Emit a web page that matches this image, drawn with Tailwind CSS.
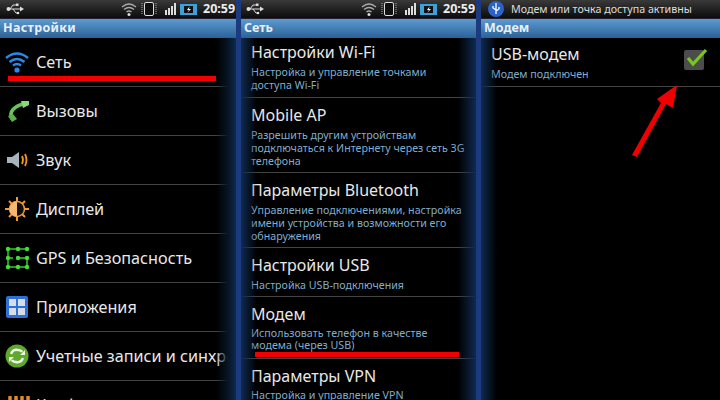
<!DOCTYPE html>
<html lang="ru">
<head>
  <meta charset="UTF-8" />
  <title>Настройки модема</title>
  <script src="https://cdn.jsdelivr.net/npm/@tailwindcss/browser@4"></script>
</head>
<body class="bg-[#1b3a80] w-[720px] h-[400px] overflow-hidden relative font-['Noto_Sans',sans-serif] text-[#e8e8e8]">
  <div class="flex gap-[5px] h-[400px]">

    <!-- Настройки -->
    <div class="relative w-[236px] h-[400px] overflow-hidden bg-black">
      <div class="flex items-center h-[18px] pl-[6px] bg-linear-to-b from-[#3a3a3a] to-[#0c0c0c]">
        <svg width="18" height="12" viewBox="0 0 18 12" class="text-[#ddd] shrink-0"><path d="M1 6h14M4 6l3-4h3M7 6l3 4h2" stroke="currentColor" fill="none"/><circle cx="2.500" cy="6" r="2" fill="currentColor"/><path d="M14 3.500l4 2.500-4 2.500z" fill="currentColor"/><rect x="10" y="0.500" width="2.500" height="2.500" fill="currentColor"/><circle cx="12" cy="10" r="1.300" fill="currentColor"/></svg>
        <div class="ml-auto flex items-center">
          <svg width="16" height="16" viewBox="0 0 16 16" class="mr-[4px]"><path d="M1 6q7-6 14 0M3 8.500q5-4 10 0M5.500 11q2.500-2 5 0" stroke="#aaa" fill="none" stroke-width="1.300"/><circle cx="8" cy="13.500" r="1.500" fill="#ddd"/></svg>
          <svg width="16" height="16" viewBox="0 0 16 16" class="mr-[8px]"><rect x="3.500" y="1.500" width="9" height="13" rx="1.500" fill="#111" stroke="#ddd"/><path d="M1 2v12M15 2v12" stroke="#aaa" stroke-dasharray="1 1"/></svg>
          <div class="flex items-end gap-[1px] h-[12px] mr-[4px]"><i class="w-[2px] h-[5px] bg-[#ddd]"></i><i class="w-[2px] h-[7px] bg-[#ddd]"></i><i class="w-[2px] h-[9px] bg-[#ddd]"></i><i class="w-[2px] h-[12px] bg-[#ddd]"></i></div>
          <svg width="17" height="11" viewBox="0 0 17 11" class="mr-[6px]"><rect width="17" height="11" fill="#3ba0dc"/><rect x="4" y="2" width="9" height="7" fill="#111"/><path d="M9.500 2.500L7 6h2l-1.500 2.500L11 5H9z" fill="#fff"/></svg>
          <span class="font-bold text-[12.500px] leading-[18px] w-[33px] text-[#eee]">20:59</span>
        </div>
      </div>
      <div class="h-[1px] bg-[#223]"></div>
      <div class="flex items-center h-[19px] pl-[3px] bg-linear-to-b from-[#5d9bd0] to-[#2a6298] text-[12.500px] tracking-[0.3px] font-bold text-[#e8f0f6]">Настройки</div>
      <div class="flex items-center h-[49px] border-b border-[#444]">
        <svg width="26" height="24" viewBox="0 0 26 24" class="ml-[4px] shrink-0"><path d="M2 8q11-9 22 0M5.500 12q7.500-6 15 0M9 15.500q4-3 8 0" stroke="#2a8ae8" fill="none" stroke-width="2.400"/><circle cx="13" cy="20" r="2.600" fill="#2a8ae8"/></svg>
        <span class="ml-[6px] text-[16.200px]">Сеть</span>
      </div>
      <div class="flex items-center h-[49px] border-b border-[#444]">
        <svg width="26" height="24" viewBox="0 0 26 24" class="ml-[4px] shrink-0"><path d="M8 20Q3 9 22 4" stroke="#6cc25a" stroke-width="3.500" fill="none"/><path d="M4 17l5-2 4 5-5 3z" fill="#5cb050"/><path d="M17 2l8 0 0 4-6 3z" fill="#8ad878"/></svg>
        <span class="ml-[6px] text-[16.200px]">Вызовы</span>
      </div>
      <div class="flex items-center h-[49px] border-b border-[#444]">
        <svg width="26" height="24" viewBox="0 0 26 24" class="ml-[4px] shrink-0"><path d="M3 9h5l7-5v16l-7-5H3z" fill="#a8b4bc"/><path d="M18 8q2 4 0 8M21 6q3 6 0 12" stroke="#f0961e" fill="none" stroke-width="1.800"/></svg>
        <span class="ml-[6px] text-[16.200px]">Звук</span>
      </div>
      <div class="flex items-center h-[49px] border-b border-[#444]">
        <svg width="26" height="24" viewBox="0 0 26 24" class="ml-[4px] shrink-0"><path d="M13 0v24M1 12h24M5 4l16 16M21 4L5 20" stroke="#f09a30" stroke-width="2"/><circle cx="13" cy="12" r="7.500" fill="#111" stroke="#f09a30" stroke-width="1.500"/><path d="M13 4.500a7.500 7.500 0 0 0 0 15z" fill="#f7b874"/></svg>
        <span class="ml-[6px] text-[16.200px]">Дисплей</span>
      </div>
      <div class="flex items-center h-[49px] border-b border-[#444]">
        <svg width="26" height="24" viewBox="0 0 26 24" class="ml-[4px] shrink-0"><path d="M23 3H4v18h19V12h-9M4 12h5" stroke="#1f9c1f" stroke-width="2" fill="none"/><g fill="#44dd33"><circle cx="4" cy="3" r="2.200"/><circle cx="14" cy="3" r="2.200"/><circle cx="23" cy="3" r="2.200"/><circle cx="4" cy="12" r="2.200"/><circle cx="14" cy="12" r="2.200"/><circle cx="23" cy="12" r="2.200"/><circle cx="4" cy="21" r="2.200"/><circle cx="14" cy="21" r="2.200"/><circle cx="23" cy="21" r="2.200"/></g></svg>
        <span class="ml-[6px] text-[16.200px]">GPS и Безопасность</span>
      </div>
      <div class="flex items-center h-[49px] border-b border-[#444]">
        <svg width="26" height="24" viewBox="0 0 26 24" class="ml-[4px] shrink-0"><rect x="2" y="1" width="22" height="22" rx="2" fill="#2f6fd8"/><g fill="#d6dde6"><rect x="5" y="4" width="7" height="7"/><rect x="14" y="4" width="7" height="7"/><rect x="5" y="13" width="7" height="7"/><rect x="14" y="13" width="7" height="7"/></g></svg>
        <span class="ml-[6px] text-[16.200px]">Приложения</span>
      </div>
      <div class="flex items-center h-[49px] border-b border-[#444]">
        <svg width="26" height="24" viewBox="0 0 26 24" class="ml-[4px] shrink-0"><circle cx="13" cy="12" r="11.500" fill="#5fa82e"/><path d="M7 10q2-5 7-4 3 0 4 2M19 14q-2 5-7 4-3 0-4-2" stroke="#eef5e4" stroke-width="2.400" fill="none"/><path d="M21 6v5h-5zM5 18v-5h5z" fill="#eef5e4"/></svg>
        <span class="ml-[6px] text-[16.200px] whitespace-nowrap">Учетные записи и синхронизация</span>
      </div>
      <div class="flex items-center h-[49px]">
        <svg width="26" height="24" viewBox="0 0 26 24" class="ml-[4px] self-start mt-[15px] shrink-0"><path d="M6 1v14M12 1v14M18 1v14M24 1v14" stroke="#e08a20" stroke-width="3.500" stroke-linecap="round"/></svg>
        <span class="ml-[6px] text-[16.200px]">Конфиденциальность</span>
      </div>
      <div class="absolute right-0 top-[38px] bottom-0 w-[20px] bg-linear-to-r from-transparent via-[#071524] via-60% to-[#0f2a50]"></div>
      <div class="absolute left-[8px] top-[76px] w-[208px] h-[5px] bg-[#f00000]"></div>
    </div>

    <!-- Сеть -->
    <div class="relative w-[235px] h-[400px] overflow-hidden bg-black">
      <div class="flex items-center h-[18px] pl-[5px] bg-linear-to-b from-[#3a3a3a] to-[#0c0c0c]">
        <svg width="18" height="12" viewBox="0 0 18 12" class="text-[#ddd] shrink-0"><path d="M1 6h14M4 6l3-4h3M7 6l3 4h2" stroke="currentColor" fill="none"/><circle cx="2.500" cy="6" r="2" fill="currentColor"/><path d="M14 3.500l4 2.500-4 2.500z" fill="currentColor"/><rect x="10" y="0.500" width="2.500" height="2.500" fill="currentColor"/><circle cx="12" cy="10" r="1.300" fill="currentColor"/></svg>
        <div class="ml-auto flex items-center">
          <svg width="16" height="16" viewBox="0 0 16 16" class="mr-[4px]"><path d="M1 6q7-6 14 0M3 8.500q5-4 10 0M5.500 11q2.500-2 5 0" stroke="#aaa" fill="none" stroke-width="1.300"/><circle cx="8" cy="13.500" r="1.500" fill="#ddd"/></svg>
          <svg width="16" height="16" viewBox="0 0 16 16" class="mr-[8px]"><rect x="3.500" y="1.500" width="9" height="13" rx="1.500" fill="#111" stroke="#ddd"/><path d="M1 2v12M15 2v12" stroke="#aaa" stroke-dasharray="1 1"/></svg>
          <div class="flex items-end gap-[1px] h-[12px] mr-[4px]"><i class="w-[2px] h-[5px] bg-[#ddd]"></i><i class="w-[2px] h-[7px] bg-[#ddd]"></i><i class="w-[2px] h-[9px] bg-[#ddd]"></i><i class="w-[2px] h-[12px] bg-[#ddd]"></i></div>
          <svg width="17" height="11" viewBox="0 0 17 11" class="mr-[6px]"><rect width="17" height="11" fill="#3ba0dc"/><rect x="4" y="2" width="9" height="7" fill="#111"/><path d="M9.500 2.500L7 6h2l-1.500 2.500L11 5H9z" fill="#fff"/></svg>
          <span class="font-bold text-[12.500px] leading-[18px] w-[33px] text-[#eee]">20:59</span>
        </div>
      </div>
      <div class="h-[1px] bg-[#223]"></div>
      <div class="flex items-center h-[19px] pl-[3px] bg-linear-to-b from-[#5d9bd0] to-[#2a6298] text-[12.500px] font-bold text-[#e8f0f6]">Сеть</div>
      <div class="h-[60px] pl-[10px] pt-[3px] border-b border-[#444]">
        <div class="text-[16px] leading-[23px]">Настройки Wi-Fi</div>
        <div class="text-[10.700px] leading-[13px] mt-[2px] text-[#7fadcd]">Настройка и управление точками<br>доступа Wi-Fi</div>
      </div>
      <div class="h-[75px] pl-[10px] pt-[6px] border-b border-[#444]">
        <div class="text-[16px] leading-[23px]">Mobile AP</div>
        <div class="text-[10.700px] leading-[13px] mt-[2px] text-[#7fadcd]">Разрешить другим устройствам<br>подключаться к Интернету через сеть 3G<br>телефона</div>
      </div>
      <div class="h-[75px] pl-[10px] pt-[6px] border-b border-[#444]">
        <div class="text-[16px] leading-[23px]">Параметры Bluetooth</div>
        <div class="text-[10.700px] leading-[13px] mt-[2px] text-[#7fadcd]">Управление подключениями, настройка<br>имени устройства и возможности его<br>обнаружения</div>
      </div>
      <div class="h-[49px] pl-[10px] pt-[6px] border-b border-[#444]">
        <div class="text-[16px] leading-[23px]">Настройки USB</div>
        <div class="text-[10.700px] leading-[13px] mt-[2px] text-[#7fadcd]">Настройка USB-подключения</div>
      </div>
      <div class="h-[62px] pl-[10px] pt-[6px] border-b border-[#444]">
        <div class="text-[16px] leading-[23px]">Модем</div>
        <div class="text-[10.700px] leading-[12px] mt-[1px] text-[#7fadcd]">Использовать телефон в качестве<br>модема (через USB)</div>
      </div>
      <div class="pl-[10px] pt-[6px]">
        <div class="text-[16px] leading-[23px]">Параметры VPN</div>
        <div class="text-[10.700px] leading-[13px] mt-[1px] text-[#7fadcd]">Настройка и управление VPN</div>
      </div>
      <div class="absolute left-0 top-[38px] bottom-0 w-[16px] bg-linear-to-l from-transparent to-[#0f2a50]"></div>
      <div class="absolute right-0 top-[38px] bottom-0 w-[18px] bg-linear-to-r from-transparent to-[#0f2a50]"></div>
      <div class="absolute left-[14px] top-[352px] w-[204px] h-[5px] bg-[#f00000]"></div>
    </div>

    <!-- Модем -->
    <div class="relative w-[239px] h-[400px] overflow-hidden bg-black">
      <div class="flex items-center h-[18px] pl-[7px] bg-linear-to-b from-[#3a3a3a] to-[#0c0c0c]">
        <svg width="16" height="16" viewBox="0 0 16 16" class="shrink-0"><circle cx="8" cy="8" r="8" fill="#2a62c8"/><path d="M8 2v11M8 9L5 7V5M8 10l3-2V6" stroke="#fff" fill="none" stroke-width="1.300"/></svg>
        <span class="ml-[7px] text-[10.700px] leading-[18px] text-[#ddd] whitespace-nowrap">Модем или точка доступа активны</span>
      </div>
      <div class="h-[1px] bg-[#223]"></div>
      <div class="flex items-center h-[19px] pl-[3px] bg-linear-to-b from-[#5d9bd0] to-[#2a6298] text-[12.500px] font-bold text-[#e8f0f6]">Модем</div>
      <div class="flex items-center justify-between h-[49px] pl-[10px] pr-[16px] border-b border-[#444]">
        <div>
          <div class="text-[16px] leading-[23px]">USB-модем</div>
          <div class="text-[10.700px] leading-[13px] mt-[2px] text-[#7fadcd]">Модем подключен</div>
        </div>
        <div class="relative w-[20px] h-[20px] mb-[4px] rounded-[2px] bg-[#4c4c4c]">
          <svg width="22" height="20" viewBox="0 0 22 20" class="absolute left-[2px] -top-[2px]"><path d="M2 10l5 6L20 2" stroke="#76c81e" stroke-width="3.200" fill="none"/></svg>
        </div>
      </div>
      <div class="absolute left-0 top-[38px] bottom-0 w-[16px] bg-linear-to-l from-transparent to-[#0f2a50]"></div>
      <svg width="60" height="90" viewBox="0 0 60 90" class="absolute left-[150px] top-[78px]"><path d="M46 7L42 30 35 26 6 79 1 77 30 25 26 21z" fill="#f00000"/></svg>
    </div>
  </div>
</body>
</html>
